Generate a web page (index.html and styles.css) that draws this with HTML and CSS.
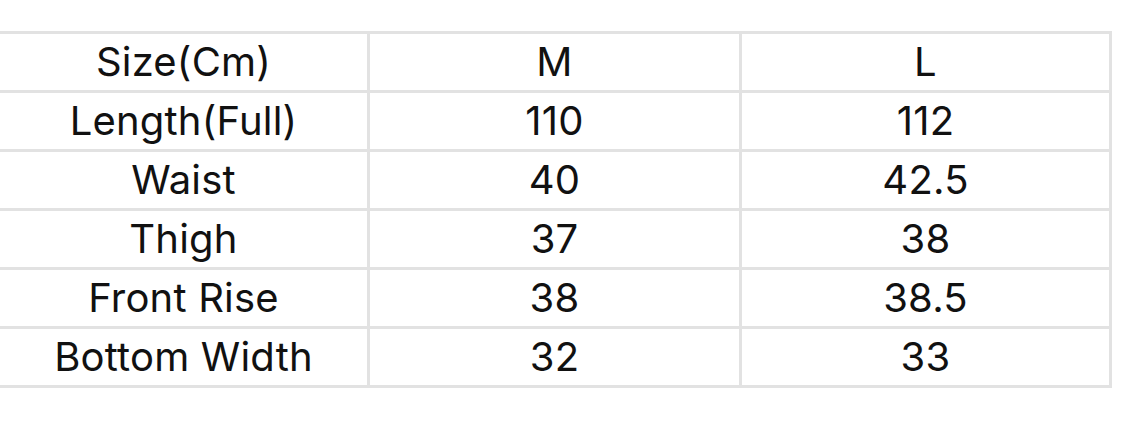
FILE: index.html
```html
<!DOCTYPE html>
<html>
<head>
<meta charset="utf-8">
<link rel="stylesheet" href="styles.css">
</head>
<body>
<table class="size-table">
  <tr><td>Size(Cm)</td><td>M</td><td>L</td></tr>
  <tr><td>Length(Full)</td><td>110</td><td>112</td></tr>
  <tr><td>Waist</td><td>40</td><td>42.5</td></tr>
  <tr><td>Thigh</td><td>37</td><td>38</td></tr>
  <tr><td>Front Rise</td><td>38</td><td>38.5</td></tr>
  <tr><td>Bottom Width</td><td>32</td><td>33</td></tr>
</table>
</body>
</html>
```

FILE: styles.css
```css
html, body {
  margin: 0;
  padding: 0;
  background: #ffffff;
}
body {
  padding-top: 31px;
  font-family: Inter, "Liberation Sans", sans-serif;
}
.size-table {
  border-collapse: collapse;
  table-layout: fixed;
  width: 1112px;
  border-top: 3px solid #e2e2e2;
}
.size-table td {
  border-right: 3px solid #e2e2e2;
  border-bottom: 3px solid #e2e2e2;
  height: 56px;
  padding: 0;
  text-align: center;
  vertical-align: middle;
  font-size: 40px;
  letter-spacing: 0.2px;
  color: #111111;
  line-height: 56px;
}
.size-table td:nth-child(1) { width: 367px; }
.size-table td:nth-child(2) { width: 369px; }
.size-table td:nth-child(3) { width: 367px; }
```
